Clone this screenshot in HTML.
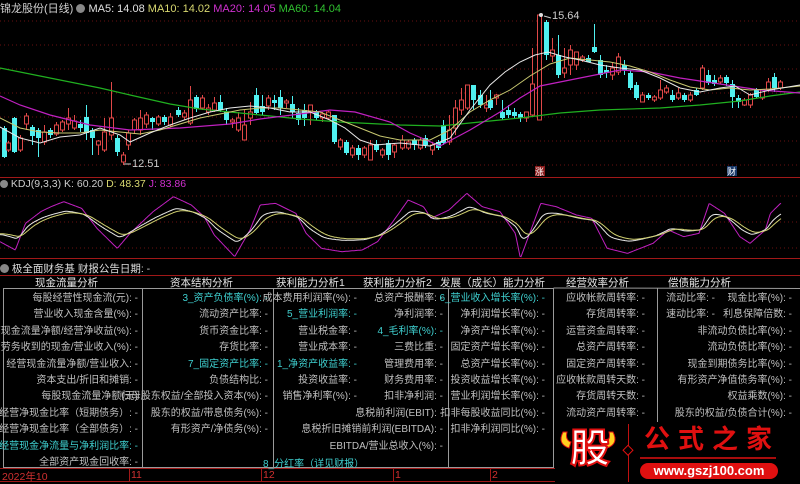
<!DOCTYPE html>
<html><head><meta charset="utf-8">
<style>
*{margin:0;padding:0;box-sizing:border-box}
body{width:800px;height:482px;background:#000;overflow:hidden;position:relative;font-family:"Liberation Sans","Noto Sans CJK SC",sans-serif;color:#c0c0c0;font-size:11px}
.abs{position:absolute;white-space:nowrap}
.col{position:absolute;top:291px;text-align:right;line-height:16.4px;white-space:nowrap;font-size:10px}
.c{color:#3fd0d0}
.hd{position:absolute;top:275px;color:#e6e6e6;font-size:10.5px;white-space:nowrap}
</style></head><body>
<svg id="s" width="800" height="482" style="position:absolute;left:0;top:0">
<g stroke="#6a1010" stroke-dasharray="1,3" stroke-width="1">
<line x1="0" y1="21" x2="800" y2="21"/><line x1="0" y1="45" x2="800" y2="45"/><line x1="0" y1="69" x2="800" y2="69"/><line x1="0" y1="93" x2="800" y2="93"/><line x1="0" y1="117" x2="800" y2="117"/><line x1="0" y1="141" x2="800" y2="141"/><line x1="0" y1="165" x2="800" y2="165"/>
<line x1="0" y1="196" x2="800" y2="196"/><line x1="0" y1="222" x2="800" y2="222"/><line x1="0" y1="248" x2="800" y2="248"/>
</g>
<line x1="0" y1="177.5" x2="800" y2="177.5" stroke="#a01818"/>
<line x1="0" y1="258.5" x2="800" y2="258.5" stroke="#a01818"/>
<line x1="0" y1="275.5" x2="800" y2="275.5" stroke="#a01818"/>
<g id="cd"></g>
<polyline fill="none" stroke="#20b020" stroke-width="1.2" points="0,68 30,74 60,80 100,88 130,95 170,104 200,109 250,114 300,119 340,122 400,125 440,126 480,122 520,118 560,113 600,110 660,108 700,105 740,101 770,96 800,92"/>
<polyline fill="none" stroke="#c020c0" stroke-width="1.2" points="0,96 20,105 50,115 90,125 130,130 180,128 230,124 260,119 300,114 330,110 355,112 390,122 410,133 440,146 470,130 500,112 520,98 540,86 580,78 620,70 650,72 680,78 720,84 760,90 800,93"/>
<polyline fill="none" stroke="#c8c870" stroke-width="1" points="0,118 20,128 40,132 60,133 80,133 100,130 120,132 140,134 160,130 180,124 200,118 220,114 240,110 260,108 280,108 300,110 320,112 340,120 360,128 380,136 400,140 430,140 450,130 470,112 490,100 510,90 530,76 550,64 570,58 590,60 610,62 630,66 650,72 670,80 690,87 710,90 730,88 750,90 770,89 800,86"/>
<polyline fill="none" stroke="#e8e8e8" stroke-width="1" points="0,127 20,138 40,143 60,137 80,135 100,128 120,135 130,142 150,133 170,125 190,118 210,112 230,108 250,106 270,108 290,112 310,112 330,120 345,128 360,140 375,145 400,143 430,146 450,138 470,110 490,85 505,72 520,62 535,55 548,52 565,57 580,60 600,65 620,68 640,70 660,78 680,88 700,92 720,88 735,86 750,95 770,90 800,85"/>
<g id="kdj"></g>
<rect x="3.5" y="288.5" width="550" height="179" fill="none" stroke="#9a9a9a"/>
<line x1="142.5" y1="288" x2="142.5" y2="468" stroke="#9a9a9a"/>
<line x1="273.5" y1="288" x2="273.5" y2="468" stroke="#9a9a9a"/>
<line x1="448.5" y1="288" x2="448.5" y2="468" stroke="#9a9a9a"/>
<line x1="657.5" y1="288" x2="657.5" y2="422" stroke="#9a9a9a"/>
<line x1="553.5" y1="288" x2="800" y2="288.5" stroke="#9a9a9a"/>
<line x1="0" y1="468.5" x2="555" y2="468.5" stroke="#a01818"/>
<line x1="0" y1="481.5" x2="555" y2="481.5" stroke="#a01818"/>
<g stroke="#a01818"><line x1="129.5" y1="468" x2="129.5" y2="482"/><line x1="261.5" y1="468" x2="261.5" y2="482"/><line x1="393.5" y1="468" x2="393.5" y2="482"/><line x1="490.5" y1="468" x2="490.5" y2="482"/></g>
<circle cx="541" cy="15" r="2" fill="#ddd"/>
<line x1="544" y1="16" x2="551" y2="18" stroke="#ccc"/>
<line x1="124" y1="164" x2="131" y2="164" stroke="#ccc"/>
<rect x="535" y="166" width="10" height="10" fill="#8a1a1a"/>
<rect x="727" y="166" width="10" height="10" fill="#1a3a6a"/>
<rect x="555" y="422" width="245" height="60" fill="#000"/>
<line x1="628.5" y1="424" x2="628.5" y2="482" stroke="#c01010"/>
<rect x="624" y="447" width="7" height="7" fill="#000" stroke="#e01010" transform="rotate(45 628 451)"/>
<line x1="640" y1="458" x2="776" y2="458" stroke="#e01010" stroke-width="1.5"/>
<rect x="640" y="463" width="138" height="16" rx="8" fill="#e01010"/>
<path d="M563,432 q-6,12 6,16 l2,-6 q-6,-2 -4,-10z M613,432 q6,12 -6,16 l-2,-6 q6,-2 4,-10z" fill="#ffd020" stroke="#e01010"/>
</svg>
<div class="abs" style="left:0;top:0;font-size:11px;color:#d0d0d0">锦龙股份(日线) <span style="display:inline-block;width:9px;height:9px;border-radius:50%;background:#888;vertical-align:-1px"></span> <span style="color:#e0e0e0">MA5: 14.08</span> <span style="color:#d8d870">MA10: 14.02</span> <span style="color:#d030d0">MA20: 14.05</span> <span style="color:#30c030">MA60: 14.04</span></div>
<div class="abs" style="left:552px;top:10px;color:#ccc;font-size:11px">15.64</div>
<div class="abs" style="left:132px;top:158px;color:#ccc;font-size:11px">12.51</div>
<div class="abs" style="left:535px;top:165px;color:#fff;font-size:9px">涨</div>
<div class="abs" style="left:727px;top:165px;color:#fff;font-size:9px">财</div>
<div class="abs" style="left:0;top:178px;font-size:10.5px;color:#ccc"><span style="display:inline-block;width:8px;height:8px;border-radius:50%;background:#888;vertical-align:-1px"></span> KDJ(9,3,3) K: 60.20 <span style="color:#d8d870">D: 48.37</span> <span style="color:#d030d0">J: 83.86</span></div>
<div class="abs" style="left:0;top:261px;font-size:10.5px;color:#ddd"><span style="display:inline-block;width:9px;height:9px;border-radius:50%;background:#888;vertical-align:-1px"></span> 极全面财务基 财报公告日期: -</div>
<div class="hd" style="left:35px">现金流量分析</div>
<div class="hd" style="left:170px">资本结构分析</div>
<div class="hd" style="left:276px">获利能力分析1</div>
<div class="hd" style="left:363px">获利能力分析2</div>
<div class="hd" style="left:440px">发展（成长）能力分析</div>
<div class="hd" style="left:566px">经营效率分析</div>
<div class="hd" style="left:668px">偿债能力分析</div>
<div class="col" style="right:662px">每股经营性现金流(元): -<br>营业收入现金含量(%): -<br>经营现金流量净额/经营净收益(%): -<br>商品、劳务收到的现金/营业收入(%): -<br>经营现金流量净额/营业收入: -<br>资本支出/折旧和摊销: -<br>每股现金流量净额(元)<br>经营净现金比率（短期债务）: -<br>经营净现金比率（全部债务）: -<br><span class="c">6_经营现金净流量与净利润比率: -</span><br>全部资产现金回收率: -</div>
<div class="col" style="right:532px"><span class="c">3_资产负债率(%): -</span><br>流动资产比率: -<br>货币资金比率: -<br>存货比率: -<br><span class="c">7_固定资产比率: -</span><br>负债结构比: -<br>归母股东权益/全部投入资本(%): -<br>股东的权益/带息债务(%): -<br>有形资产/净债务(%): -</div>
<div class="col" style="right:443px">成本费用利润率(%): -<br><span class="c">5_营业利润率: -</span><br>营业税金率: -<br>营业成本率: -<br><span class="c">1_净资产收益率: -</span><br>投资收益率: -<br>销售净利率(%): -</div>
<div class="col" style="right:357px">总资产报酬率: -<br>净利润率: -<br><span class="c">4_毛利率(%): -</span><br>三费比重: -<br>管理费用率: -<br>财务费用率: -<br>扣非净利润: -<br>息税前利润(EBIT): -<br>息税折旧摊销前利润(EBITDA): -<br>EBITDA/营业总收入(%): -</div>
<div class="col" style="right:255px"><span class="c">6_营业收入增长率(%): -</span><br>净利润增长率(%): -<br>净资产增长率(%): -<br>固定资产增长率(%): -<br>总资产增长率(%): -<br>投资收益增长率(%): -<br>营业利润增长率(%): -<br>扣非每股收益同比(%): -<br>扣非净利润同比(%): -</div>
<div class="col" style="right:155px">应收帐款周转率: -<br>存货周转率: -<br>运营资金周转率: -<br>总资产周转率: -<br>固定资产周转率: -<br>应收帐款周转天数: -<br>存货周转天数: -<br>流动资产周转率: -</div>
<div class="col" style="right:85px">流动比率: -<br>速动比率: -</div>
<div class="col" style="right:8px">现金比率(%): -<br>利息保障倍数: -<br>非流动负债比率(%): -<br>流动负债比率(%): -<br>现金到期债务比率(%): -<br>有形资产净值债务率(%): -<br>权益乘数(%): -<br>股东的权益/负债合计(%): -</div>
<div class="abs c" style="left:263px;top:455px;font-size:10px">8_分红率（详见财报）</div>
<div class="abs" style="left:2px;top:469px;color:#d03030;font-size:10.5px">2022年10</div>
<div class="abs" style="left:131px;top:469px;color:#d03030;font-size:10.5px">11</div>
<div class="abs" style="left:263px;top:469px;color:#d03030;font-size:10.5px">12</div>
<div class="abs" style="left:395px;top:469px;color:#d03030;font-size:10.5px">1</div>
<div class="abs" style="left:492px;top:469px;color:#d03030;font-size:10.5px">2</div>
<div class="abs" style="left:570px;top:424px;font-size:40px;font-weight:bold;color:#fff;-webkit-text-stroke:2px #e01010;line-height:50px">股</div>
<div class="abs" style="left:644px;top:424px;font-size:26px;font-weight:bold;color:#e01010;letter-spacing:8px;line-height:30px">公式之家</div>
<div class="abs" style="left:644px;top:463px;width:130px;text-align:center;font-size:13px;font-weight:bold;color:#fff;line-height:16px">www.gszj100.com</div>
<script>
var C=[[4,128,157,126,158,'b'],[8,143,150,141,152,'r'],[14,118,152,117,153,'b'],[20,138,150,135,152,'r'],[26,116,124,113,130,'r'],[32,127,136,125,145,'b'],[38,130,138,128,157,'b'],[44,132,142,125,145,'r'],[50,130,135,128,138,'b'],[56,125,134,122,136,'r'],[62,122,130,120,132,'r'],[68,118,124,108,130,'r'],[74,121,128,115,130,'r'],[80,124,128,120,132,'b'],[86,117,133,105,140,'b'],[92,130,138,128,155,'b'],[98,141,145,140,155,'r'],[104,132,150,118,152,'r'],[111,118,135,82,140,'r'],[117,138,152,135,156,'b'],[123,155,162,152,165,'r'],[128,133,145,130,150,'r'],[134,120,130,118,134,'r'],[140,118,130,110,135,'r'],[146,115,124,112,128,'r'],[152,118,122,117,130,'b'],[158,117,124,115,126,'r'],[164,117,122,115,125,'b'],[170,117,125,113,127,'r'],[178,110,115,107,117,'b'],[184,113,117,110,120,'r'],[190,100,123,86,125,'r'],[196,97,109,95,112,'b'],[202,98,108,95,110,'r'],[208,108,112,104,115,'r'],[214,103,110,97,112,'r'],[220,102,110,95,112,'b'],[226,112,120,108,125,'b'],[232,120,122,118,128,'r'],[238,118,130,112,132,'r'],[244,125,140,110,140,'r'],[250,112,118,102,125,'r'],[256,95,113,88,115,'b'],[262,106,112,95,115,'b'],[268,98,106,95,110,'r'],[274,100,103,95,110,'b'],[280,97,108,90,115,'b'],[286,101,103,99,108,'r'],[292,104,112,96,118,'b'],[298,113,120,108,125,'b'],[304,110,118,104,126,'b'],[310,105,111,105,125,'r'],[316,112,118,110,120,'b'],[322,114,118,112,122,'r'],[328,112,118,110,120,'r'],[334,115,142,115,144,'b'],[340,140,147,138,150,'r'],[346,142,153,140,155,'b'],[352,148,155,145,158,'r'],[358,148,155,145,160,'b'],[364,148,155,146,158,'r'],[370,145,160,140,158,'r'],[376,144,150,140,152,'b'],[382,150,155,148,158,'r'],[388,143,155,140,160,'b'],[394,145,152,143,158,'r'],[402,140,148,135,150,'r'],[408,142,148,140,150,'r'],[414,140,145,138,150,'b'],[420,140,148,137,150,'r'],[425,138,145,135,148,'b'],[432,145,150,142,155,'r'],[438,142,148,140,150,'b'],[443,125,143,120,145,'b'],[449,130,142,115,145,'r'],[455,108,128,100,135,'r'],[461,100,110,88,115,'r'],[467,85,108,85,110,'r'],[473,85,100,85,110,'b'],[480,95,105,90,108,'b'],[486,105,108,95,112,'r'],[490,100,108,90,110,'b'],[496,95,98,94,105,'r'],[502,112,118,100,120,'b'],[508,110,115,105,118,'b'],[514,112,116,108,118,'b'],[520,114,118,112,122,'b'],[526,112,118,112,122,'r'],[532,84,115,48,117,'r'],[539,15,120,14,120,'r'],[546,22,55,20,60,'b'],[552,50,56,38,62,'r'],[558,55,75,35,78,'b'],[564,68,73,48,78,'r'],[570,50,65,45,75,'r'],[576,52,65,52,70,'r'],[582,57,60,55,62,'r'],[588,58,62,55,62,'b'],[594,47,52,24,53,'b'],[600,60,75,55,78,'b'],[606,70,73,65,78,'b'],[612,68,75,62,80,'r'],[618,57,72,53,75,'r'],[624,65,70,60,75,'b'],[630,73,88,70,90,'b'],[636,85,98,82,100,'b'],[642,95,102,92,102,'r'],[648,95,98,93,100,'b'],[654,97,100,95,102,'r'],[660,90,98,80,100,'r'],[666,88,92,85,94,'r'],[672,95,100,90,102,'b'],[678,93,98,88,100,'r'],[684,95,100,93,102,'b'],[690,95,100,92,102,'r'],[696,90,95,88,96,'b'],[702,68,88,65,90,'r'],[708,75,83,70,85,'b'],[714,80,84,75,86,'b'],[720,78,82,75,84,'r'],[726,77,83,75,86,'b'],[732,84,97,80,108,'b'],[738,98,102,95,108,'b'],[744,100,105,98,106,'r'],[750,95,105,93,108,'r'],[756,90,97,88,98,'b'],[762,90,98,90,100,'r'],[768,82,90,78,92,'r'],[774,77,88,73,92,'b'],[780,82,88,80,90,'r']];
var g=document.getElementById('cd'),h='';
C.forEach(function(c){var x=c[0],col=c[5]=='r'?'#e04848':'#50f0f0';
h+='<line x1="'+(x+.5)+'" y1="'+c[3]+'" x2="'+(x+.5)+'" y2="'+c[4]+'" stroke="'+col+'"/>';
if(c[5]=='r')h+='<rect x="'+(x-1.5)+'" y="'+c[1]+'" width="4" height="'+Math.max(1,c[2]-c[1])+'" fill="#000" stroke="'+col+'"/>';
else h+='<rect x="'+(x-2)+'" y="'+c[1]+'" width="5" height="'+Math.max(1,c[2]-c[1])+'" fill="'+col+'"/>';});
g.innerHTML=h;
var J=[[0,215],[30,240],[50,160],[80,125],[100,110],[125,95],[160,115],[190,175],[230,235],[255,190],[300,125],[340,80],[375,105],[400,140],[420,195],[460,260],[490,180],[510,105],[540,100],[580,130],[600,190],[630,235],[670,245],[710,240],[740,215],[770,155],[800,90],[830,110],[845,145],[880,120],[915,70],[945,110],[980,125],[1010,190],[1020,265],[1060,100],[1090,110],[1130,135],[1160,145],[1190,235],[1230,250],[1280,220],[1310,180],[1340,200],[1370,190],[1390,100],[1420,130],[1450,200],[1470,220],[1500,180],[1510,130],[1530,100]];
var pts=J.map(function(p){return [p[0]/1.96,170+p[1]/3];});
var arr=[],i=0;for(var x=0;x<=781;x++){while(i<pts.length-2&&pts[i+1][0]<x)i++;var a=pts[i],b=pts[i+1],t=Math.min(1,Math.max(0,(x-a[0])/(b[0]-a[0])));arr.push(a[1]+(b[1]-a[1])*t);}
var mid=224,K=[],D=[],k=arr[0],d=arr[0];
for(var j=0;j<arr.length;j++){k=k+(arr[j]-k)/5;d=d+(k-d)/6;K.push(k);D.push(d);}
function pl(a,c){return '<polyline fill="none" stroke="'+c+'" points="'+a.map(function(v,i){return i+','+v.toFixed(1)}).join(' ')+'"/>';}
var KK=K.map(function(v){return mid+(v-mid)*0.6}),DD=D.map(function(v){return mid+(v-mid)*0.55});
document.getElementById('kdj').innerHTML=pl(arr,'#c020c0')+pl(KK,'#e8e8e8')+pl(DD,'#d0d070');
</script>
</body></html>
